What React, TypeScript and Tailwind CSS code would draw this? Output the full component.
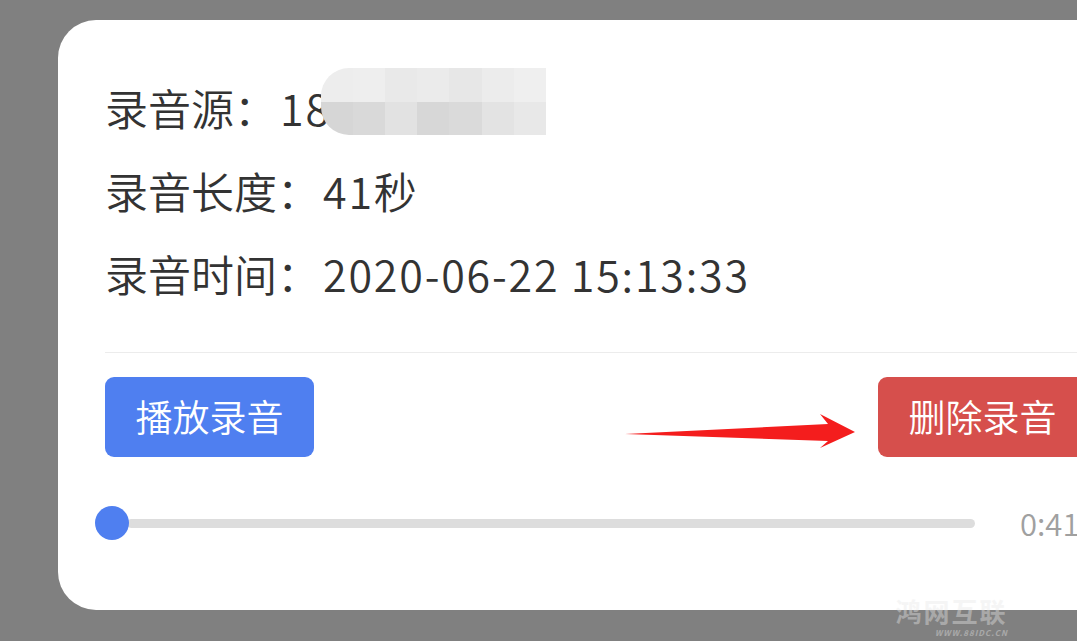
import React from "react";

const mosaicTop = ["#ededed", "#eeeeee", "#e9e9e9", "#ebebeb", "#e7e7e7", "#ececec", "#efefef"];
const mosaicBottom = ["#d6d6d6", "#d9d9d9", "#e2e2e2", "#d7d7d7", "#dadada", "#e3e3e3", "#e8e8e8"];

const Mosaic = () => (
  <span className="inline-flex flex-col w-[225px] h-[67px] rounded-l-[28px] overflow-hidden -ml-[10px] -mt-[12px]">
    <span className="flex flex-1">
      {mosaicTop.map((c, i) => (
        <span key={i} className="flex-1" style={{ background: c }} />
      ))}
    </span>
    <span className="flex flex-1">
      {mosaicBottom.map((c, i) => (
        <span key={i} className="flex-1" style={{ background: c }} />
      ))}
    </span>
  </span>
);

const Row = ({ label, children }: { label: string; children: React.ReactNode }) => (
  <div className="h-[83px] flex items-center text-[43px] font-[350] text-[#333] whitespace-nowrap">
    <span>{label}：</span>
    <span className="ml-[3px] flex items-center tracking-[1.8px]">{children}</span>
  </div>
);

export default function App() {
  return (
    <div
      className="relative w-[1077px] h-[641px] bg-[#808080] overflow-hidden pt-[20px] pl-[58px]"
      style={{ fontFamily: '"Noto Sans CJK SC", "Noto Sans", sans-serif' }}
    >
      <div className="w-[1076px] h-[590px] bg-white rounded-[38px] px-[47px] pt-[46px]">
        <Row label="录音源">
          <span>18</span>
          <Mosaic />
        </Row>
        <Row label="录音长度">
          <span>41秒</span>
        </Row>
        <Row label="录音时间">
          <span>2020-06-22 15:13:33</span>
        </Row>

        <div className="mt-[37px] border-t border-[#ececec]" />

        <div className="mt-[24px] flex justify-between">
          <button className="w-[209px] h-[80px] rounded-[9px] bg-[#4f7ff0] text-white text-[37px] font-[350]">
            播放录音
          </button>
          <button className="w-[209px] h-[80px] rounded-[9px] bg-[#d64f4c] text-white text-[37px] font-[350]">
            删除录音
          </button>
        </div>

        <div className="mt-[43px] flex items-center">
          <div className="relative flex-1 h-[34px] flex items-center">
            <div className="ml-[-10px] w-[34px] h-[34px] rounded-full bg-[#4f7ff0] z-10" />
            <div className="flex-1 h-[9px] rounded-full bg-[#dddddd] -ml-[2px]" />
          </div>
          <span className="ml-[45px] w-[67px] text-[31px] font-[350] text-[#a0a0a0]">0:41</span>
        </div>
      </div>

      <svg className="absolute left-[620px] top-[410px]" width="240" height="44" viewBox="620 410 240 44">
        <polygon points="625,434 828,424 820,414 855,432 820,448 828,441" fill="#f41d1d" />
      </svg>

      <div className="absolute left-[895px] top-[597px] flex flex-col items-center gap-[3px] opacity-40 text-[#e8e8e8]">
        <span className="text-[26px] leading-[28px] font-bold tracking-[2px]">鸿网互联</span>
        <span className="text-[8px] leading-[9px] italic font-bold tracking-[1px] ml-[40px]">WWW.88IDC.CN</span>
      </div>
    </div>
  );
}
